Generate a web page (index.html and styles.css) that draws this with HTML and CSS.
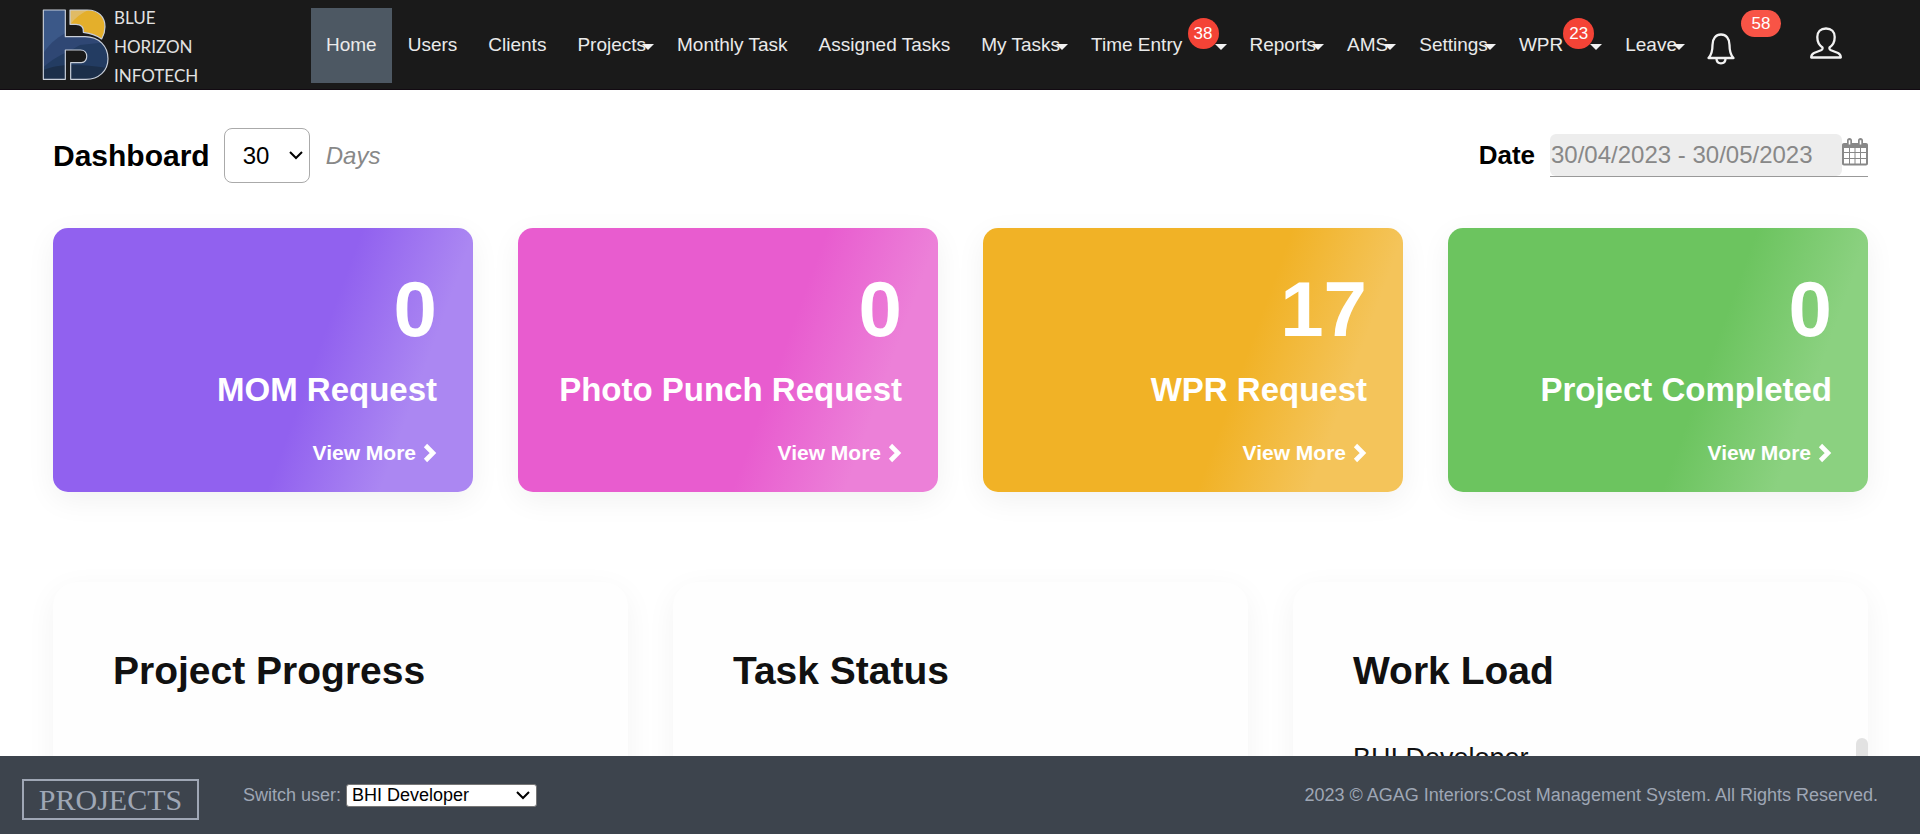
FILE: index.html
```html
<!DOCTYPE html>
<html lang="en">
<head>
<meta charset="utf-8">
<title>Dashboard</title>
<link rel="stylesheet" href="styles.css">
</head>
<body>
<svg class="defs" aria-hidden="true">
  <symbol id="chevron" viewBox="0 0 14 20"><path d="M2.500 2.500L10 10L2.500 17.500" fill="none" stroke="currentColor" stroke-width="4.600"/></symbol>
</svg>
<header class="topbar">
  <a class="brand" href="#" aria-label="Blue Horizon Infotech">
    <svg class="brand-mark" viewBox="36 24 204 222" aria-hidden="true">
      <defs>
        <clipPath id="b-clip"><path id="b-shape" d="M40 30H106V110H165C208 110 234 140 234 176C234 213 206 238 168 238H122V188H154C176 188 176 150 152 150H106V238H40Z"/></clipPath>
        <clipPath id="y-clip"><path d="M120 30H172C205 30 225 50 225 80C225 98 220 108 215 117C198 104 180 100 160 97C162 80 152 73 138 73H120Z"/></clipPath>
      </defs>
      <g clip-path="url(#b-clip)">
        <path d="M36 24H240V246H36Z" fill="#3b5888"/>
        <path d="M36 165C62 125 85 110 115 95L240 105V246H36Z" fill="#2f4774"/>
        <path d="M36 205C80 165 110 160 150 135L240 125V246H36Z" fill="#233c62"/>
        <path d="M36 212C80 192 140 190 240 205V246H36Z" fill="#1c2f4a"/>
      </g>
      <g clip-path="url(#y-clip)">
        <path d="M115 24H230V120H115Z" fill="#e4af2b"/>
        <path d="M115 24H190C165 32 138 50 120 74Z" fill="#e0bb66"/>
      </g>
      <g fill="none" stroke="#c9cfd9" stroke-width="3.5" stroke-linejoin="round">
        <use href="#b-shape"/>
        <path d="M120 30H172C205 30 225 50 225 80C225 98 220 108 215 117C198 104 180 100 160 97C162 80 152 73 138 73H120Z"/>
      </g>
    </svg>
    <span class="brand-name"><span>BLUE</span><span>HORIZON</span><span>INFOTECH</span></span>
  </a>
  <nav aria-label="Main">
    <ul class="menu">
      <li><a class="active" href="#">Home</a></li>
      <li><a href="#">Users</a></li>
      <li><a href="#">Clients</a></li>
      <li><a class="drop" href="#">Projects</a></li>
      <li><a href="#">Monthly Task</a></li>
      <li><a href="#">Assigned Tasks</a></li>
      <li><a class="drop" href="#">My Tasks</a></li>
      <li><a class="drop" href="#">Time Entry <span class="count">38</span></a></li>
      <li><a class="drop" href="#">Reports</a></li>
      <li><a class="drop" href="#">AMS</a></li>
      <li><a class="drop" href="#">Settings</a></li>
      <li><a class="drop" href="#">WPR<span class="count">23</span></a></li>
      <li><a class="drop" href="#">Leave</a></li>
    </ul>
  </nav>
  <div class="tools">
    <button class="tool bell" type="button" aria-label="Notifications">
      <svg width="28" height="32" viewBox="0 0 28 32" fill="none" stroke="#f2f2f2" stroke-width="2.3" stroke-linejoin="round" aria-hidden="true"><path d="M1.500 25C4.500 22 5.500 19 5.500 12C5.500 5.500 9 1.500 14 1.500C19 1.500 22.500 5.500 22.500 12C22.500 19 23.500 22 26.500 25Z"/><path d="M9.500 25.500C9.500 28.500 11.300 30.300 14 30.300C16.700 30.300 18.500 28.500 18.500 25.500"/></svg>
      <span class="pill">58</span>
    </button>
    <button class="tool" type="button" aria-label="Account">
      <svg width="32" height="32" viewBox="0 0 32 32" fill="none" stroke="#f2f2f2" stroke-width="2.300" stroke-linejoin="round" aria-hidden="true"><path d="M16 1.500C10.500 1.500 7.300 5 7.300 10C7.300 15 9.500 18.500 12.500 20.500C12.800 21.800 12.500 22.500 11 23.200L4 26C2 27 1.200 28 1.200 30.500H30.800C30.800 28 30 27 28 26L21 23.200C19.500 22.500 19.200 21.800 19.500 20.500C22.500 18.500 24.700 15 24.700 10C24.700 5 21.500 1.500 16 1.500Z"/></svg>
    </button>
  </div>
</header>

<main class="page">
  <div class="page-head">
    <h1>Dashboard</h1>
    <select class="days" aria-label="Days range"><option>30</option></select>
    <em class="days-label">Days</em>
    <label class="date-label" for="range">Date</label>
    <span class="date-field">
      <input id="range" type="text" value="30/04/2023 - 30/05/2023">
      <svg width="26" height="28" viewBox="0 0 26 28" aria-hidden="true"><path fill="#888" fill-rule="evenodd" d="M2 5H5V2.500C5 1 6 0 7.500 0S10 1 10 2.500V5H16V2.500C16 1 17 0 18.500 0S21 1 21 2.500V5H24C25.200 5 26 5.800 26 7V25.500C26 26.700 25.200 27.500 24 27.500H2C.8 27.500 0 26.700 0 25.500V7C0 5.800.8 5 2 5ZM2 10V14H7V10ZM8 10V14H12.500V10ZM13.500 10V14H18V10ZM19 10V14H24V10ZM2 15V20H7V15ZM8 15V20H12.500V15ZM13.500 15V20H18V15ZM19 15V20H24V15ZM2 21V25.500H7V21ZM8 21V25.500H12.500V21ZM13.500 21V25.500H18V21ZM19 21V25.500H24V21ZM6.700 2.200V6.500H8.300V2.200ZM17.700 2.200V6.500H19.300V2.200Z"/></svg>
    </span>
  </div>

  <section class="stats" aria-label="Requests">
    <article class="stat violet"><strong>0</strong><h2>MOM Request</h2><a href="#">View More <svg class="chev" aria-hidden="true"><use href="#chevron"/></svg></a></article>
    <article class="stat pink"><strong>0</strong><h2>Photo Punch Request</h2><a href="#">View More <svg class="chev" aria-hidden="true"><use href="#chevron"/></svg></a></article>
    <article class="stat amber"><strong>17</strong><h2>WPR Request</h2><a href="#">View More <svg class="chev" aria-hidden="true"><use href="#chevron"/></svg></a></article>
    <article class="stat green"><strong>0</strong><h2>Project Completed</h2><a href="#">View More <svg class="chev" aria-hidden="true"><use href="#chevron"/></svg></a></article>
  </section>

  <section class="panels" aria-label="Overview">
    <article class="panel"><h2>Project Progress</h2></article>
    <article class="panel"><h2>Task Status</h2></article>
    <article class="panel"><h2>Work Load</h2>
      <div class="load"><p>BHI Developer</p><span class="thumb"></span></div>
    </article>
  </section>
</main>

<footer class="footer">
  <a class="projects" href="#">PROJECTS</a>
  <label for="switch">Switch user:</label>
  <select id="switch" class="switch"><option>BHI Developer</option></select>
  <p class="copy">2023 © AGAG Interiors:Cost Management System. All Rights Reserved.</p>
</footer>
</body>
</html>
```
FILE: styles.css
```css
* { box-sizing: border-box; }
body {
  margin: 0;
  height: 100vh;
  display: flex;
  flex-direction: column;
  overflow: hidden;
  background: #fff;
  color: #111;
  font-family: "Liberation Sans", Arial, sans-serif;
}
h1, h2, p, ul { margin: 0; padding: 0; }
a { color: inherit; text-decoration: none; }
.defs { display: none; }
select {
  appearance: none;
  background: #fff url("data:image/svg+xml,%3Csvg xmlns='http://www.w3.org/2000/svg' width='14' height='9' fill='none' stroke='%23000' stroke-width='2'%3E%3Cpath d='M1 1l6 6 6-6'/%3E%3C/svg%3E") no-repeat right 6px center;
}

/* Top bar */
.topbar {
  flex: none;
  display: flex;
  align-items: flex-start;
  padding: 8px 78px 6px 42px;
  background: #1a1a1a;
  border-bottom: 1px solid #120a12;
}
.brand { flex: none; display: flex; gap: 4px; width: 269px; }
.brand-mark { width: 68px; height: 74px; }
.brand-name {
  display: flex;
  flex-direction: column;
  font: 17px/29px Lato, sans-serif;
  margin-top: -5px;
  height: 80px;
  color: #e2e2e2;
}
.menu { display: flex; gap: 1px; list-style: none; }
.menu a {
  position: relative;
  display: block;
  height: 75px;
  padding: 0 15px;
  font-size: 19px;
  line-height: 74px;
  color: #eaeaea;
  white-space: nowrap;
}
.menu .active { background: #4d5863; }
.drop::after {
  content: "";
  position: absolute;
  right: 7px;
  top: 36px;
  border: 6px solid transparent;
  border-top-color: #f2f2f2;
  border-bottom: 0;
}
.count {
  display: inline-block;
  width: 31px;
  height: 31px;
  border-radius: 50%;
  background: #f44336;
  color: #fff;
  font-size: 17px;
  line-height: 31px;
  text-align: center;
  vertical-align: 12px;
}
.tools { flex: 1; display: flex; align-items: flex-start; justify-content: space-between; padding: 19px 0 0 15px; }
.tool { position: relative; padding: 0; border: 0; background: none; line-height: 0; }
.bell { padding-top: 6px; }
.pill {
  position: absolute;
  left: 34px;
  top: -17px;
  width: 40px;
  border-radius: 14px;
  background: #f85446;
  color: #fff;
  font: 17px/27px "Liberation Sans", Arial, sans-serif;
}

/* Page */
.page { flex: 1; min-height: 0; overflow: hidden; padding: 38px 52px 0 53px; }
.page-head { display: flex; align-items: center; height: 55px; color: #000; }
h1 { font-size: 30px; line-height: 36px; }
.days {
  width: 86px;
  height: 55px;
  margin: 0 16px 0 14px;
  padding: 0 0 0 18px;
  border: 1px solid #aaa;
  border-radius: 8px;
  color: #000;
  font: 24px "Liberation Sans", Arial, sans-serif;
}
.days-label { color: #888; font-size: 24px; }
.date-label { margin-left: auto; font-size: 26px; font-weight: bold; }
.date-field {
  display: flex;
  align-items: center;
  margin-left: 15px;
  border-bottom: 1px solid #999;
}
.date-field svg { margin-bottom: 6px; }
.date-field input {
  width: 292px;
  height: 42px;
  padding: 0 1px;
  border: 0;
  border-radius: 6px;
  background: #ededed;
  color: #888;
  font: 24px "Liberation Sans", Arial, sans-serif;
}

/* Summary cards */
.stats { display: grid; grid-template-columns: repeat(4, 1fr); gap: 45px; margin-top: 45px; }
.stat {
  display: flex;
  flex-direction: column;
  align-items: flex-end;
  height: 264px;
  padding: 36px 36px 0;
  border-radius: 15px;
  box-shadow: 0 8px 30px rgba(0, 0, 0, .06);
  color: #fff;
  background: linear-gradient(110deg, var(--base) 60%, var(--light) 82%);
}
.violet { --base: #9161ef; --light: #ab87f2; }
.pink { --base: #e85ccf; --light: #ec80d8; }
.amber { --base: #f1b226; --light: #f4c45a; }
.green { --base: #6cc45f; --light: #8bd180; }
.stat strong { font-size: 78px; line-height: 90px; }
.stat h2 { margin-top: 16px; font-size: 33px; line-height: 40px; }
.stat a { display: flex; align-items: center; gap: 7px; margin-top: 29px; font-size: 21px; font-weight: bold; line-height: 28px; }
.chev { width: 14px; height: 20px; }

/* Panels */
.panels { display: grid; grid-template-columns: repeat(3, 1fr); gap: 45px; margin-top: 90px; }
.panel {
  height: 460px;
  padding: 66px 0 0 60px;
  border-radius: 24px;
  background: #fefefe;
  box-shadow: 0 8px 30px rgba(0, 0, 0, .05);
}
.panel h2 { font-size: 39px; line-height: 46px; }
.load { display: flex; justify-content: space-between; margin-top: 44px; }
.load p { padding-top: 4px; font-size: 27px; line-height: 32px; }
.thumb { width: 12px; height: 120px; border-radius: 6px; background: #e2e2e2; }

/* Footer */
.footer {
  flex: none;
  display: flex;
  align-items: center;
  height: 78px;
  padding: 0 42px 0 22px;
  background: #3d444d;
  color: #9fa7b5;
  font-size: 18px;
}
.projects {
  width: 177px;
  margin: 8px 44px 0 0;
  border: 2px solid #9fa7b5;
  font: 30px/37px "Liberation Serif", "Times New Roman", serif;
  text-align: center;
}
.switch {
  width: 191px;
  height: 23px;
  margin-left: 5px;
  padding: 0 0 0 5px;
  border: 1px solid #767676;
  border-radius: 3px;
  color: #000;
  font: 18px/20px "Liberation Sans", Arial, sans-serif;
}
.copy { margin-left: auto; }
```
